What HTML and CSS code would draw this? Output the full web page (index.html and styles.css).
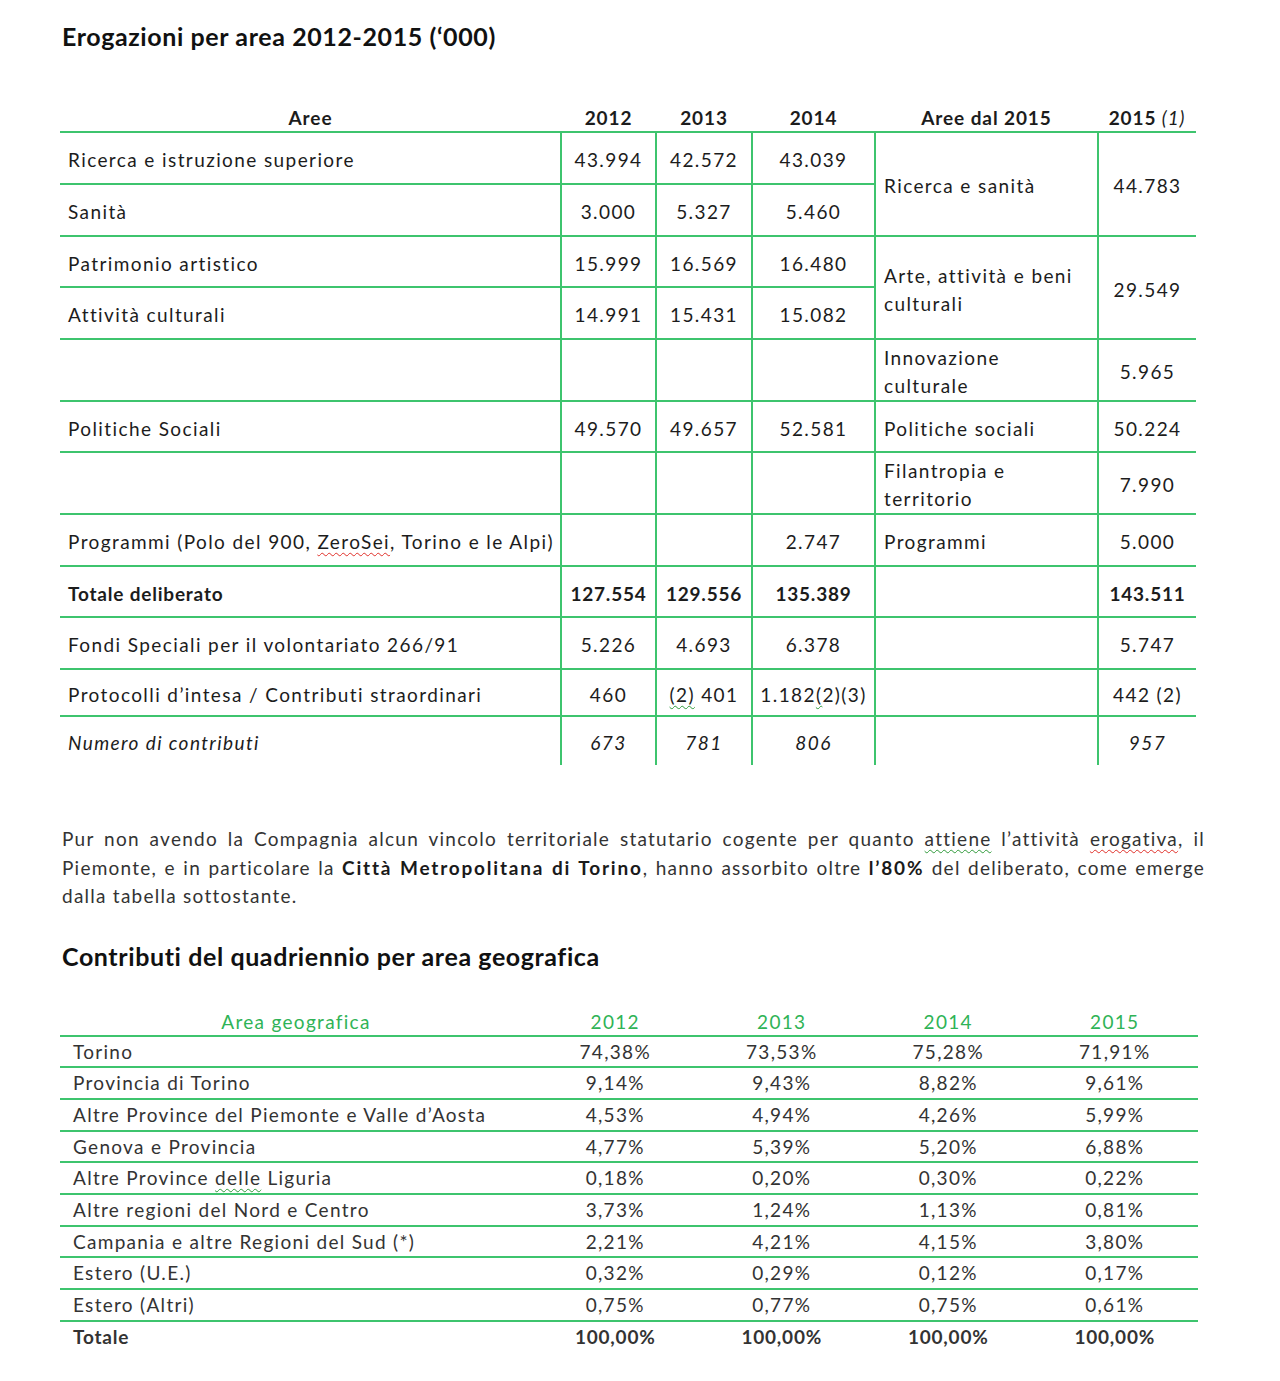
FILE: index.html
```html
<!DOCTYPE html>
<html lang="it">
<head>
<meta charset="utf-8">
<title>Erogazioni per area</title>
<link rel="stylesheet" href="styles.css">
</head>
<body>
<main class="page">
  <h1 class="title title-first">Erogazioni per area 2012-2015 (‘000)</h1>

  <table class="erog">
    <colgroup>
      <col class="c-area"><col class="c-y1"><col class="c-y2"><col class="c-y3"><col class="c-area15"><col class="c-y15">
    </colgroup>
    <thead>
      <tr class="hrow">
        <th>Aree</th><th>2012</th><th>2013</th><th>2014</th><th>Aree dal 2015</th><th>2015 <i>(1)</i></th>
      </tr>
    </thead>
    <tbody>
      <tr class="r52">
        <td class="lbl">Ricerca e istruzione superiore</td><td>43.994</td><td>42.572</td><td>43.039</td>
        <td class="lbl" rowspan="2">Ricerca e sanità</td><td rowspan="2">44.783</td>
      </tr>
      <tr class="r52">
        <td class="lbl">Sanità</td><td>3.000</td><td>5.327</td><td>5.460</td>
      </tr>
      <tr class="r51">
        <td class="lbl">Patrimonio artistico</td><td>15.999</td><td>16.569</td><td>16.480</td>
        <td class="lbl" rowspan="2">Arte, attività e beni<br>culturali</td><td rowspan="2">29.549</td>
      </tr>
      <tr class="r52">
        <td class="lbl">Attività culturali</td><td>14.991</td><td>15.431</td><td>15.082</td>
      </tr>
      <tr class="r62">
        <td class="lbl"></td><td></td><td></td><td></td>
        <td class="lbl">Innovazione<br>culturale</td><td>5.965</td>
      </tr>
      <tr class="r51">
        <td class="lbl">Politiche Sociali</td><td>49.570</td><td>49.657</td><td>52.581</td>
        <td class="lbl">Politiche sociali</td><td>50.224</td>
      </tr>
      <tr class="r62">
        <td class="lbl"></td><td></td><td></td><td></td>
        <td class="lbl">Filantropia e<br>territorio</td><td>7.990</td>
      </tr>
      <tr class="r52">
        <td class="lbl">Programmi (Polo del 900, <span class="sp-red">ZeroSei</span>, Torino e le Alpi)</td><td></td><td></td><td>2.747</td>
        <td class="lbl">Programmi</td><td>5.000</td>
      </tr>
      <tr class="r51 bold">
        <td class="lbl">Totale deliberato</td><td>127.554</td><td>129.556</td><td>135.389</td>
        <td class="lbl"></td><td>143.511</td>
      </tr>
      <tr class="r52">
        <td class="lbl">Fondi Speciali per il volontariato 266/91</td><td>5.226</td><td>4.693</td><td>6.378</td>
        <td class="lbl"></td><td>5.747</td>
      </tr>
      <tr class="r47">
        <td class="lbl">Protocolli d’intesa / Contributi straordinari</td><td>460</td><td><span class="sp-green">(2)</span> 401</td><td>1.182<span class="sp-green">(</span>2)(3)</td>
        <td class="lbl"></td><td>442 (2)</td>
      </tr>
      <tr class="r49 last ital">
        <td class="lbl">Numero di contributi</td><td>673</td><td>781</td><td>806</td>
        <td class="lbl"></td><td>957</td>
      </tr>
    </tbody>
  </table>

  <p class="intro">Pur non avendo la Compagnia alcun vincolo territoriale statutario cogente per quanto <span class="sp-green">attiene</span> l’attività <span class="sp-red">erogativa</span>, il Piemonte, e in particolare la <b>Città Metropolitana di Torino</b>, hanno assorbito oltre <b>l’80%</b> del deliberato, come emerge dalla tabella sottostante.</p>

  <h2 class="title title-second">Contributi del quadriennio per area geografica</h2>

  <table class="geo">
    <colgroup>
      <col class="g-area"><col class="g-y"><col class="g-y"><col class="g-y"><col class="g-y">
    </colgroup>
    <thead>
      <tr>
        <th>Area geografica</th><th>2012</th><th>2013</th><th>2014</th><th>2015</th>
      </tr>
    </thead>
    <tbody>
      <tr><td class="lbl">Torino</td><td>74,38%</td><td>73,53%</td><td>75,28%</td><td>71,91%</td></tr>
      <tr><td class="lbl">Provincia di Torino</td><td>9,14%</td><td>9,43%</td><td>8,82%</td><td>9,61%</td></tr>
      <tr><td class="lbl">Altre Province del Piemonte e Valle d’Aosta</td><td>4,53%</td><td>4,94%</td><td>4,26%</td><td>5,99%</td></tr>
      <tr><td class="lbl">Genova e Provincia</td><td>4,77%</td><td>5,39%</td><td>5,20%</td><td>6,88%</td></tr>
      <tr><td class="lbl">Altre Province <span class="sp-green">delle</span> Liguria</td><td>0,18%</td><td>0,20%</td><td>0,30%</td><td>0,22%</td></tr>
      <tr><td class="lbl">Altre regioni del Nord e Centro</td><td>3,73%</td><td>1,24%</td><td>1,13%</td><td>0,81%</td></tr>
      <tr><td class="lbl">Campania e altre Regioni del Sud (*)</td><td>2,21%</td><td>4,21%</td><td>4,15%</td><td>3,80%</td></tr>
      <tr><td class="lbl">Estero (U.E.)</td><td>0,32%</td><td>0,29%</td><td>0,12%</td><td>0,17%</td></tr>
      <tr><td class="lbl">Estero (Altri)</td><td>0,75%</td><td>0,77%</td><td>0,75%</td><td>0,61%</td></tr>
      <tr class="total"><td class="lbl">Totale</td><td>100,00%</td><td>100,00%</td><td>100,00%</td><td>100,00%</td></tr>
    </tbody>
  </table>
</main>
</body>
</html>
```

FILE: styles.css
```css
html, body {
  margin: 0;
  padding: 0;
  background: #ffffff;
}

body {
  font-family: Lato, "Liberation Sans", sans-serif;
  color: #1c1c1c;
}

.page {
  width: 1280px;
  padding: 0 0 0 60px;
  box-sizing: border-box;
}

.title {
  margin: 0;
  font-size: 25px;
  line-height: 30px;
  font-weight: 700;
  color: #111;
  padding-left: 2px;
  letter-spacing: 0.6px;
}

.title-first {
  margin-top: 21px;
}

.title-second {
  margin-top: 30px;
}

/* ---------- Table 1 ---------- */
.erog {
  margin-top: 54px;
  border-collapse: collapse;
  table-layout: fixed;
  width: 1136px;
  font-size: 19px;
  letter-spacing: 1.4px;
}

.c-area { width: 501px; }
.c-y1 { width: 95px; }
.c-y2 { width: 96px; }
.c-y3 { width: 123px; }
.c-area15 { width: 223px; }
.c-y15 { width: 98px; }

.erog th {
  font-weight: 700;
  text-align: center;
  padding: 0;
  height: 26px;
  line-height: 26px;
  border-bottom: 2px solid #3ec46e;
  vertical-align: middle;
  letter-spacing: 0.9px;
}

.erog th i {
  font-weight: 400;
}

.erog td {
  padding: 4px 4px 0;
  text-align: center;
  vertical-align: middle;
  line-height: 28px;
  border-bottom: 2px solid #3ec46e;
  border-left: 2px solid #3ec46e;
  white-space: nowrap;
}

.erog td.lbl {
  text-align: left;
  padding-left: 8px;
}

.erog tr > td:first-child {
  border-left: none;
}

.erog tr.last td {
  border-bottom: none;
}

.erog .r52 { height: 52px; }
.erog .r51 { height: 51px; }
.erog .r62 { height: 62px; }
.erog .r47 { height: 47px; }
.erog .r49 { height: 49px; }

.erog .bold td { font-weight: 700; letter-spacing: 0.8px; }
.erog .ital td { font-style: italic; }

.sp-red {
  text-decoration: underline wavy #e0302a;
  text-decoration-thickness: 1px;
  text-underline-offset: 3px;
}

.sp-green {
  text-decoration: underline wavy #2f9a3a;
  text-decoration-thickness: 1px;
  text-underline-offset: 3px;
}

/* ---------- Paragraph ---------- */
.intro {
  margin: 60px 0 0 2px;
  width: 1143px;
  font-size: 19px;
  line-height: 28.5px;
  text-align: justify;
  color: #333;
  letter-spacing: 1.25px;
}

.intro b {
  color: #1a1a1a;
  letter-spacing: 1.8px;
}

/* ---------- Table 2 ---------- */
.geo {
  margin-top: 38px;
  border-collapse: collapse;
  table-layout: fixed;
  width: 1138px;
  font-size: 19px;
  letter-spacing: 1.3px;
  color: #333;
}

.g-area { width: 472px; }
.g-y { width: 166.5px; }

.geo th {
  color: #2fb356;
  font-weight: 400;
  text-align: center;
  padding: 0;
  line-height: 26px;
  border-bottom: 2px solid #3ec46e;
}

.geo td {
  padding: 0;
  text-align: center;
  line-height: 29.7px;
  border-bottom: 2px solid #3ec46e;
  white-space: nowrap;
}

.geo td.lbl {
  text-align: left;
  padding-left: 13px;
}

.geo tr.total td {
  border-bottom: none;
  font-weight: 700;
  letter-spacing: 0.8px;
}
```
